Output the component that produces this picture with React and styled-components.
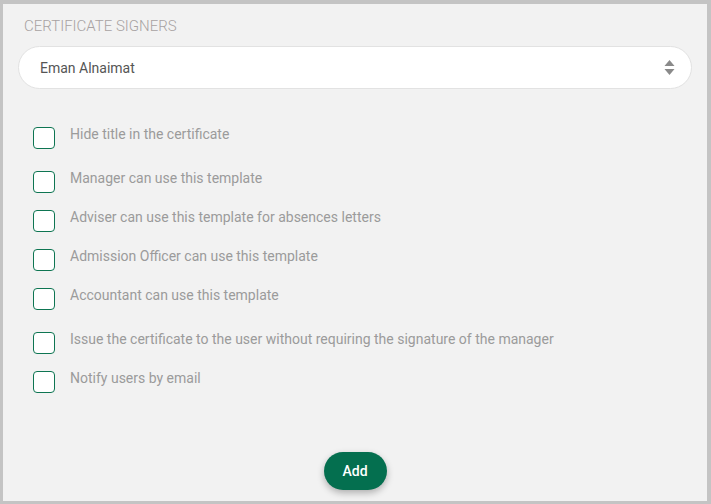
import React from 'react'
import styled, { createGlobalStyle } from 'styled-components'

const GlobalStyle = createGlobalStyle`
  html, body {
    margin: 0;
    padding: 0;
    background: #c4c4c4;
  }
  body {
    font-family: Roboto, "Liberation Sans", sans-serif;
  }
`

const Panel = styled.div`
  box-sizing: border-box;
  width: 711px;
  height: 504px;
  border-style: solid;
  border-color: #c4c4c4;
  border-width: 4px 4px 3px 3px;
  background: #f2f2f2;
  display: flex;
  flex-direction: column;
  padding: 13px 15px 11px 15px;
`

const Title = styled.div`
  font-size: 15px;
  font-weight: 300;
  line-height: 18px;
  color: #a8a2a2;
  text-transform: uppercase;
  padding-left: 6px;
`

const Select = styled.div`
  box-sizing: border-box;
  margin-top: 11px;
  height: 43px;
  border: 1px solid #e2e2e2;
  border-radius: 22px;
  background: #fff;
  display: flex;
  align-items: center;
  justify-content: space-between;
  padding: 0 16px 0 21px;
  font-size: 14px;
  color: #555;
`

const SortIcon = () => (
  <svg width="11" height="15" viewBox="0 0 11 15">
    <path d="M5.5 0 L10.5 6 L0.5 6 Z" fill="#8a8a8a" />
    <path d="M5.5 15 L10.5 9 L0.5 9 Z" fill="#8a8a8a" />
  </svg>
)

const Options = styled.div`
  margin-top: 38px;
  padding-left: 15px;
  display: flex;
  flex-direction: column;
  gap: 17px;
`

const Row = styled.label`
  display: flex;
  align-items: flex-start;
  gap: 15px;
  margin-top: ${p => (p.$spaced ? '5px' : '0')};
  cursor: pointer;
`

const Box = styled.span`
  box-sizing: border-box;
  flex: none;
  width: 22px;
  height: 22px;
  border: 1.3px solid #0e7552;
  border-radius: 4px;
  background: #fff;
`

const Label = styled.span`
  margin-top: -1px;
  font-size: 14px;
  line-height: 16px;
  color: #9b9b9b;
`

const Footer = styled.div`
  margin-top: auto;
  display: flex;
  justify-content: center;
`

const AddButton = styled.button`
  width: 63px;
  height: 38px;
  border: none;
  border-radius: 19px;
  background: #046f4f;
  color: #fff;
  font-family: Roboto, "Liberation Sans", sans-serif;
  font-size: 14px;
  font-weight: 500;
  box-shadow: 0 3px 7px rgba(0, 0, 0, 0.28);
  cursor: pointer;
`

const options = [
  { text: 'Hide title in the certificate' },
  { text: 'Manager can use this template', spaced: true },
  { text: 'Adviser can use this template for absences letters' },
  { text: 'Admission Officer can use this template' },
  { text: 'Accountant can use this template' },
  { text: 'Issue the certificate to the user without requiring the signature of the manager', spaced: true },
  { text: 'Notify users by email' },
]

export default function App() {
  return (
    <>
      <GlobalStyle />
      <Panel>
        <Title>Certificate Signers</Title>
        <Select>
          <span>Eman Alnaimat</span>
          <SortIcon />
        </Select>
        <Options>
          {options.map(o => (
            <Row key={o.text} $spaced={o.spaced}>
              <Box />
              <Label>{o.text}</Label>
            </Row>
          ))}
        </Options>
        <Footer>
          <AddButton>Add</AddButton>
        </Footer>
      </Panel>
    </>
  )
}
